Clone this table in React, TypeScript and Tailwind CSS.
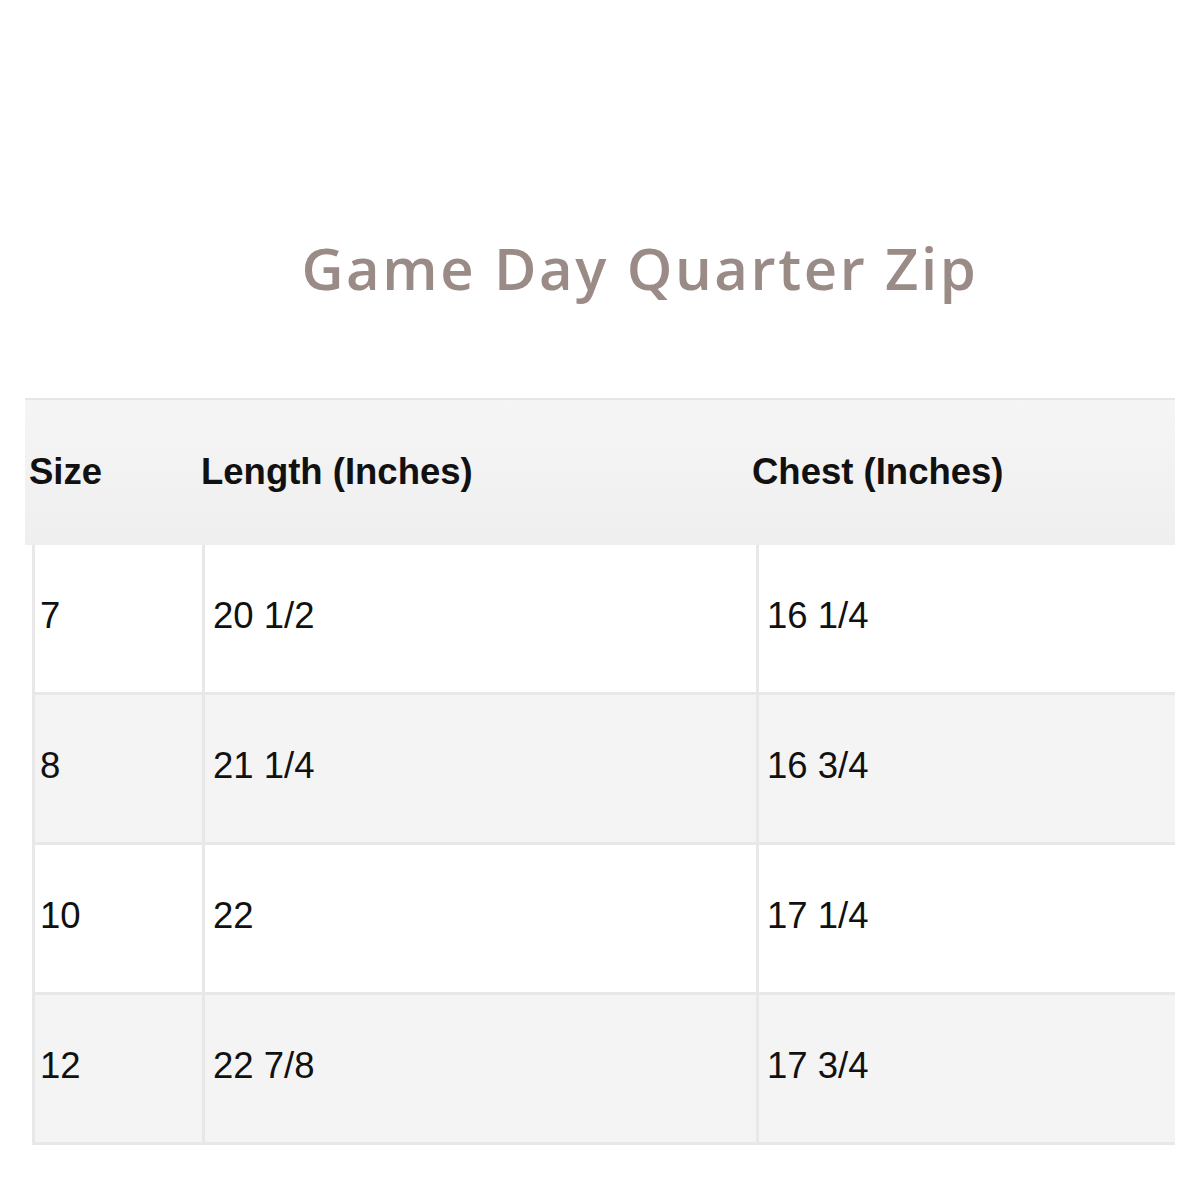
const rows = [
  { size: "7", length: "20 1/2", chest: "16 1/4" },
  { size: "8", length: "21 1/4", chest: "16 3/4" },
  { size: "10", length: "22", chest: "17 1/4" },
  { size: "12", length: "22 7/8", chest: "17 3/4" },
];

export default function App() {
  return (
    <div className="h-[1200px] w-[1200px] bg-white font-['Liberation_Sans',Arial,sans-serif] text-[#111]">
      <div className="flex h-[398px] justify-center pt-[226px]">
        <h1 className="h-[84px] pl-[80px] font-['Open_Sans',sans-serif] text-[58px] leading-[84px] font-semibold tracking-[2.6px] text-[#9a8b86]">
          Game Day Quarter Zip
        </h1>
      </div>

      <div className="ml-[25px] w-[1150px]">
        <div className="grid h-[147px] grid-cols-[172px_551px_1fr] items-center border-t-2 border-[#e6e6e6] bg-gradient-to-b from-[#f5f5f5] to-[#efefef] pl-[4px] text-[36.5px] font-bold">
          <div>Size</div>
          <div>Length (Inches)</div>
          <div>Chest (Inches)</div>
        </div>

        <div className="ml-[7px]">
          {rows.map((row, i) => (
            <div
              key={row.size}
              className={`grid h-[150px] grid-cols-[170px_554px_1fr] border-b-[3px] border-[#e8e8e8] text-[36.5px] ${
                i % 2 === 1 ? "bg-[#f4f4f4]" : "bg-white"
              }`}
            >
              <div className="flex items-center border-l-[3px] border-[#e8e8e8] pb-[5px] pl-[5px]">
                {row.size}
              </div>
              <div className="flex items-center border-l-[3px] border-[#e8e8e8] pb-[5px] pl-[8px]">
                {row.length}
              </div>
              <div className="flex items-center border-l-[3px] border-[#e8e8e8] pb-[5px] pl-[8px]">
                {row.chest}
              </div>
            </div>
          ))}
        </div>
      </div>
    </div>
  );
}
